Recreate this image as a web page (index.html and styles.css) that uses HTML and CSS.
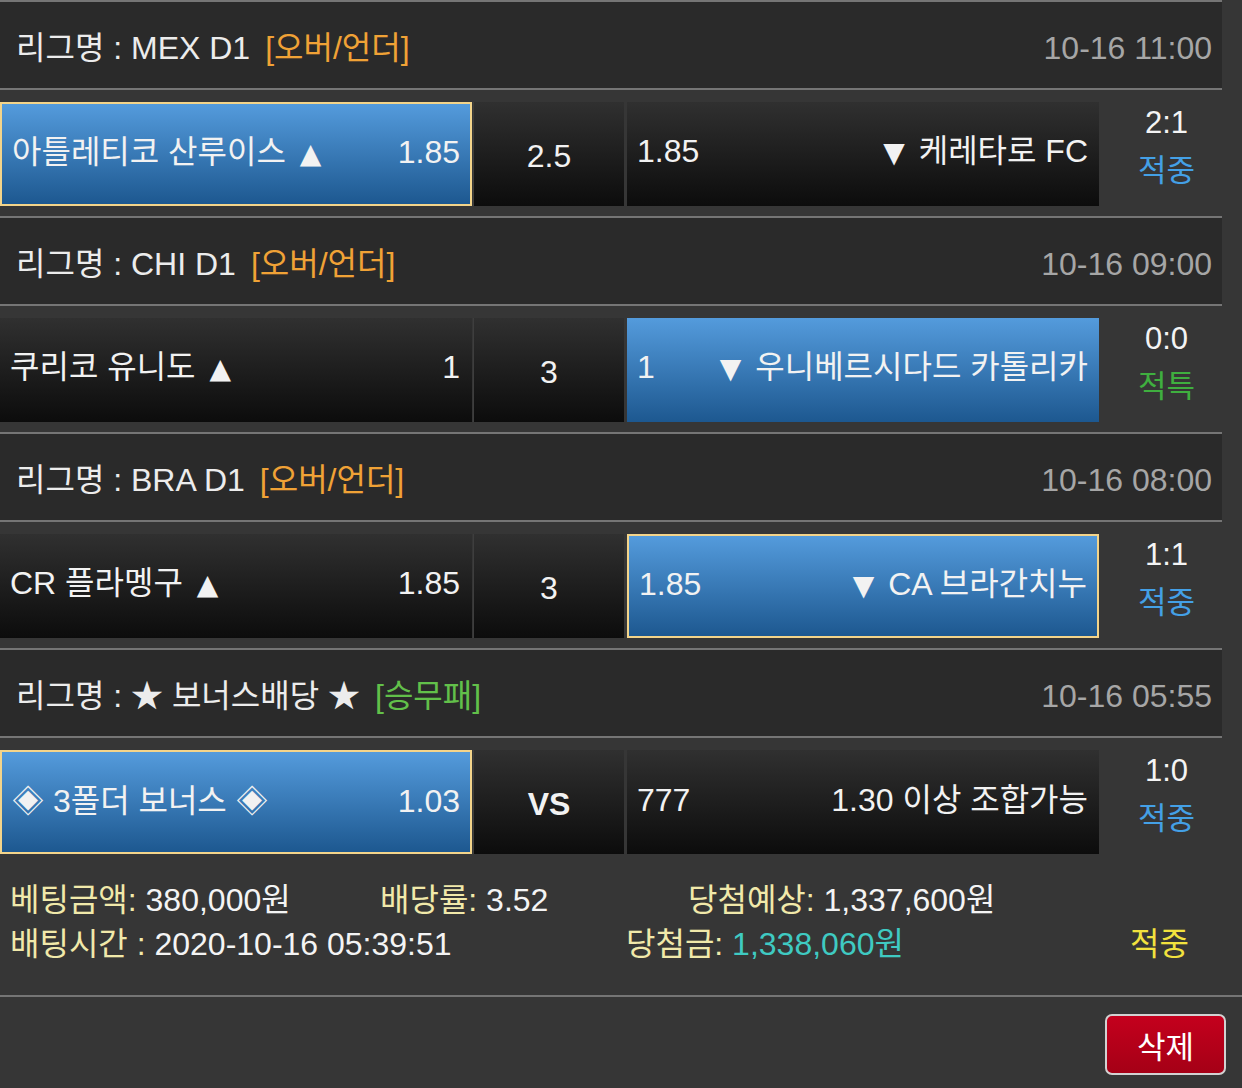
FILE: index.html
```html
<!DOCTYPE html>
<html lang="ko">
<head>
<meta charset="utf-8">
<title>베팅내역</title>
<link rel="stylesheet" href="styles.css">
</head>
<body>
<div class="list">
  <div class="group">
    <div class="header">
      <div class="league">리그명 : MEX D1<span class="type ou">[오버/언더]</span></div>
      <div class="date">10-16 11:00</div>
    </div>
    <div class="match">
      <div class="cell home sel pick"><span>아틀레티코 산루이스 <span class="tri">▲</span></span><span>1.85</span></div>
      <div class="cell mid">2.5</div>
      <div class="cell away"><span>1.85</span><span><span class="tri">▼</span> 케레타로 FC</span></div>
      <div class="score"><div>2:1</div><div class="hit">적중</div></div>
    </div>
  </div>
  <div class="group">
    <div class="header">
      <div class="league">리그명 : CHI D1<span class="type ou">[오버/언더]</span></div>
      <div class="date">10-16 09:00</div>
    </div>
    <div class="match">
      <div class="cell home"><span>쿠리코 유니도 <span class="tri">▲</span></span><span>1</span></div>
      <div class="cell mid">3</div>
      <div class="cell away sel"><span>1</span><span><span class="tri">▼</span> 우니베르시다드 카톨리카</span></div>
      <div class="score"><div>0:0</div><div class="special">적특</div></div>
    </div>
  </div>
  <div class="group">
    <div class="header">
      <div class="league">리그명 : BRA D1<span class="type ou">[오버/언더]</span></div>
      <div class="date">10-16 08:00</div>
    </div>
    <div class="match">
      <div class="cell home"><span>CR 플라멩구 <span class="tri">▲</span></span><span>1.85</span></div>
      <div class="cell mid">3</div>
      <div class="cell away sel pick"><span>1.85</span><span><span class="tri">▼</span> CA 브라간치누</span></div>
      <div class="score"><div>1:1</div><div class="hit">적중</div></div>
    </div>
  </div>
  <div class="group">
    <div class="header">
      <div class="league">리그명 : ★ 보너스배당 ★<span class="type wdl">[승무패]</span></div>
      <div class="date">10-16 05:55</div>
    </div>
    <div class="match">
      <div class="cell home sel pick"><span>◈ 3폴더 보너스 ◈</span><span>1.03</span></div>
      <div class="cell mid vs">VS</div>
      <div class="cell away"><span>777</span><span>1.30 이상 조합가능</span></div>
      <div class="score"><div>1:0</div><div class="hit">적중</div></div>
    </div>
  </div>
</div>
<div class="summary">
  <div class="sum-row">
    <div class="item w1"><span class="label">베팅금액:</span> 380,000원</div>
    <div class="item w2"><span class="label">배당률:</span> 3.52</div>
    <div class="item"><span class="label">당첨예상:</span> 1,337,600원</div>
  </div>
  <div class="sum-row">
    <div class="item w3"><span class="label">배팅시간 :</span> 2020-10-16 05:39:51</div>
    <div class="item w4"><span class="label">당첨금:</span> <span class="win">1,338,060원</span></div>
    <div class="item result">적중</div>
  </div>
</div>
<div class="actions">
  <button class="btn-delete" type="button">삭제</button>
</div>
</body>
</html>
```
FILE: styles.css
```css
* {
  box-sizing: border-box;
  margin: 0;
  padding: 0;
}

body {
  width: 1242px;
  height: 1088px;
  overflow: hidden;
  background: #363636;
  font-family: "Liberation Sans", "Noto Sans CJK KR", sans-serif;
  color: #f2f2f2;
}

.list {
  width: 1222px;
}

.header {
  height: 90px;
  border-top: 2px solid #757575;
  border-bottom: 2px solid #757575;
  background: #2a2a2a;
  display: flex;
  align-items: center;
  justify-content: space-between;
  padding: 6px 10px 0 16px;
  font-size: 32px;
  line-height: 40px;
}

.league {
  color: #ececec;
}

.type {
  margin-left: 15px;
}

.type.ou {
  color: #f0a236;
}

.type.wdl {
  color: #62c04a;
}

.date {
  color: #a6a6a6;
}

.match {
  height: 126px;
  display: flex;
  align-items: flex-start;
}

.cell {
  margin-top: 12px;
  height: 104px;
  display: flex;
  flex-wrap: wrap;
  align-content: center;
  align-items: baseline;
  justify-content: space-between;
  padding: 0 12px 4px 10px;
  font-size: 32px;
  line-height: 40px;
  white-space: nowrap;
  background: linear-gradient(#303030, #0c0c0c);
}

.tri {
  font-family: "DejaVu Sans", sans-serif;
  font-size: 28px;
  padding: 0 5px;
}

.cell.home {
  width: 472px;
}

.cell.mid {
  width: 150px;
  margin-left: 2px;
  justify-content: center;
  padding: 4px 0 0;
  box-shadow: -1px 0 0 #3e3e3e;
}

.cell.mid.vs {
  font-weight: bold;
}

.cell.away {
  width: 472px;
  margin-left: 3px;
  padding: 0 11px 4px 10px;
}

.cell.sel {
  background: linear-gradient(#549bdc, #1d5890);
}

.cell.pick {
  border: 2px solid #f3d48a;
}

.cell.home.pick,
.cell.away.pick {
  padding: 0 10px 2px 10px;
}

.score {
  flex: 1;
  text-align: center;
  padding: 10px 0 0 12px;
  font-size: 31px;
  line-height: 46px;
  color: #f4f4f4;
}

.score .hit,
.score .special {
  margin-top: 2px;
}

.score .hit {
  color: #44a0e6;
}

.score .special {
  color: #3faf3f;
}

.summary {
  padding: 14px 0 29px 10px;
  border-bottom: 2px solid #757575;
  font-size: 32px;
  line-height: 44px;
  color: #f4f4f4;
}

.sum-row {
  display: flex;
}

.item {
  white-space: nowrap;
}

.w1 {
  width: 370px;
}

.w2 {
  width: 308px;
}

.w3 {
  width: 616px;
}

.w4 {
  width: 504px;
}

.label {
  color: #f1e9aa;
}

.win {
  color: #3fcac2;
}

.result {
  color: #f2e23e;
}

.actions {
  display: flex;
  justify-content: flex-end;
  padding: 17px 16px 0 0;
}

.btn-delete {
  width: 121px;
  height: 61px;
  border: 2px solid #d2d2d2;
  border-radius: 7px;
  background: linear-gradient(#c4001d, #a50016);
  color: #ffffff;
  font-family: "Liberation Sans", "Noto Sans CJK KR", sans-serif;
  font-size: 31px;
}
```
